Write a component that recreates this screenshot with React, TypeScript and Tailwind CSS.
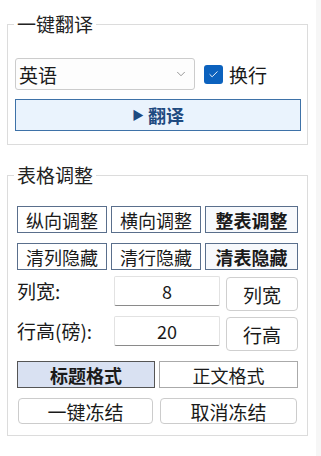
import React, { useState } from 'react';
import { ChevronDown, Check } from 'lucide-react';

const font = { fontFamily: '"Noto Sans CJK SC", "Noto Sans", sans-serif' };

export default function App() {
  const [wrap, setWrap] = useState(true);
  const [colWidth, setColWidth] = useState('8');
  const [rowHeight, setRowHeight] = useState('20');

  return (
    <div className="flex w-[321px] h-[456px] bg-white text-[#1a1a1a]" style={font}>
      <div className="w-[316px] pt-[12px]">
        {/* 一键翻译 */}
        <fieldset className="ml-[7px] w-[301px] border border-[#dcdcdc] pl-[7px] pr-[6px] pt-[22px] pb-[13px]">
          <legend className="px-[3px] ml-[-1px] text-[19px] leading-[24px] text-[#222]">一键翻译</legend>
          <div className="flex items-center">
            <div className="flex items-center justify-between w-[180px] h-[32px] border border-[#cccccc] rounded-[3px] bg-[#fdfdfd] pl-[3px] pr-[6px]">
              <span className="text-[19px] leading-none">英语</span>
              <ChevronDown className="w-[14px] h-[14px] text-[#777]" strokeWidth={1.3} />
            </div>
            <button
              onClick={() => setWrap(!wrap)}
              className="flex items-center ml-[9px]"
            >
              <span className={`flex items-center justify-center w-[19px] h-[19px] rounded-[3px] ${wrap ? 'bg-[#0c62be]' : 'bg-white border border-[#888]'}`}>
                {wrap && <Check className="w-[11px] h-[11px] text-white" strokeWidth={2} />}
              </span>
              <span className="ml-[6px] text-[19px] leading-none">换行</span>
            </button>
          </div>
          <button className="mt-[9px] flex items-center justify-center w-[286px] h-[32px] border border-[#3e72a8] bg-[#eaf3fd] text-[#1e4a80] font-bold">
            <span className="text-[12px] mr-[4px] leading-none">▶</span>
            <span className="text-[18px] leading-none">翻译</span>
          </button>
        </fieldset>

        {/* 表格调整 */}
        <fieldset className="mt-[18px] ml-[7px] w-[301px] border border-[#dcdcdc] pl-[9px] pr-[8px] pt-[19px] pb-[11px]">
          <legend className="px-[3px] ml-[-3px] text-[19px] leading-[24px] text-[#222]">表格调整</legend>
          <div className="grid grid-cols-[90px_90px_93px] gap-x-[4px] gap-y-[10px]">
            <button className="h-[27px] border border-[#5a6f8c] bg-white text-[18px] leading-none">纵向调整</button>
            <button className="h-[27px] border border-[#5a6f8c] bg-white text-[18px] leading-none">横向调整</button>
            <button className="h-[27px] border border-[#5a6f8c] bg-[#f7f9fc] text-[18px] leading-none font-bold">整表调整</button>
            <button className="h-[27px] border border-[#5a6f8c] bg-white text-[18px] leading-none">清列隐藏</button>
            <button className="h-[27px] border border-[#5a6f8c] bg-white text-[18px] leading-none">清行隐藏</button>
            <button className="h-[27px] border border-[#5a6f8c] bg-[#f7f9fc] text-[18px] leading-none font-bold">清表隐藏</button>
          </div>

          <div className="flex items-start mt-[6px]">
            <span className="w-[97px] text-[19px] leading-[30px]">列宽:</span>
            <input
              value={colWidth}
              onChange={(e) => setColWidth(e.target.value)}
              className="w-[106px] h-[30px] border border-[#e2e2e2] border-b-[#8a8a8a] rounded-[2px] text-center text-[18px] outline-none"
            />
            <button className="ml-[6px] mt-[1px] w-[72px] h-[34px] border border-[#cfcfcf] rounded-[4px] bg-white text-[19px] leading-none">列宽</button>
          </div>

          <div className="flex items-start mt-[5px]">
            <span className="w-[97px] text-[19px] leading-[30px]">行高(磅):</span>
            <input
              value={rowHeight}
              onChange={(e) => setRowHeight(e.target.value)}
              className="w-[106px] h-[30px] border border-[#e2e2e2] border-b-[#8a8a8a] rounded-[2px] text-center text-[18px] outline-none"
            />
            <button className="ml-[6px] mt-[1px] w-[72px] h-[34px] border border-[#cfcfcf] rounded-[4px] bg-white text-[19px] leading-none">行高</button>
          </div>

          <div className="grid grid-cols-[138px_139px] gap-x-[4px] mt-[10px]">
            <button className="h-[27px] border border-[#555] bg-[#d9e1f2] text-[18px] leading-none font-bold">标题格式</button>
            <button className="h-[27px] border border-[#aaaaaa] bg-white text-[18px] leading-none">正文格式</button>
          </div>

          <div className="flex mt-[10px] pl-[1px]">
            <button className="w-[135px] h-[26px] border border-[#cccccc] rounded-[4px] bg-white text-[19px] leading-none">一键冻结</button>
            <button className="ml-[7px] w-[137px] h-[26px] border border-[#cccccc] rounded-[4px] bg-white text-[19px] leading-none">取消冻结</button>
          </div>
        </fieldset>
      </div>
      <div className="w-[5px] h-full bg-[#f6f6f6]" />
    </div>
  );
}
